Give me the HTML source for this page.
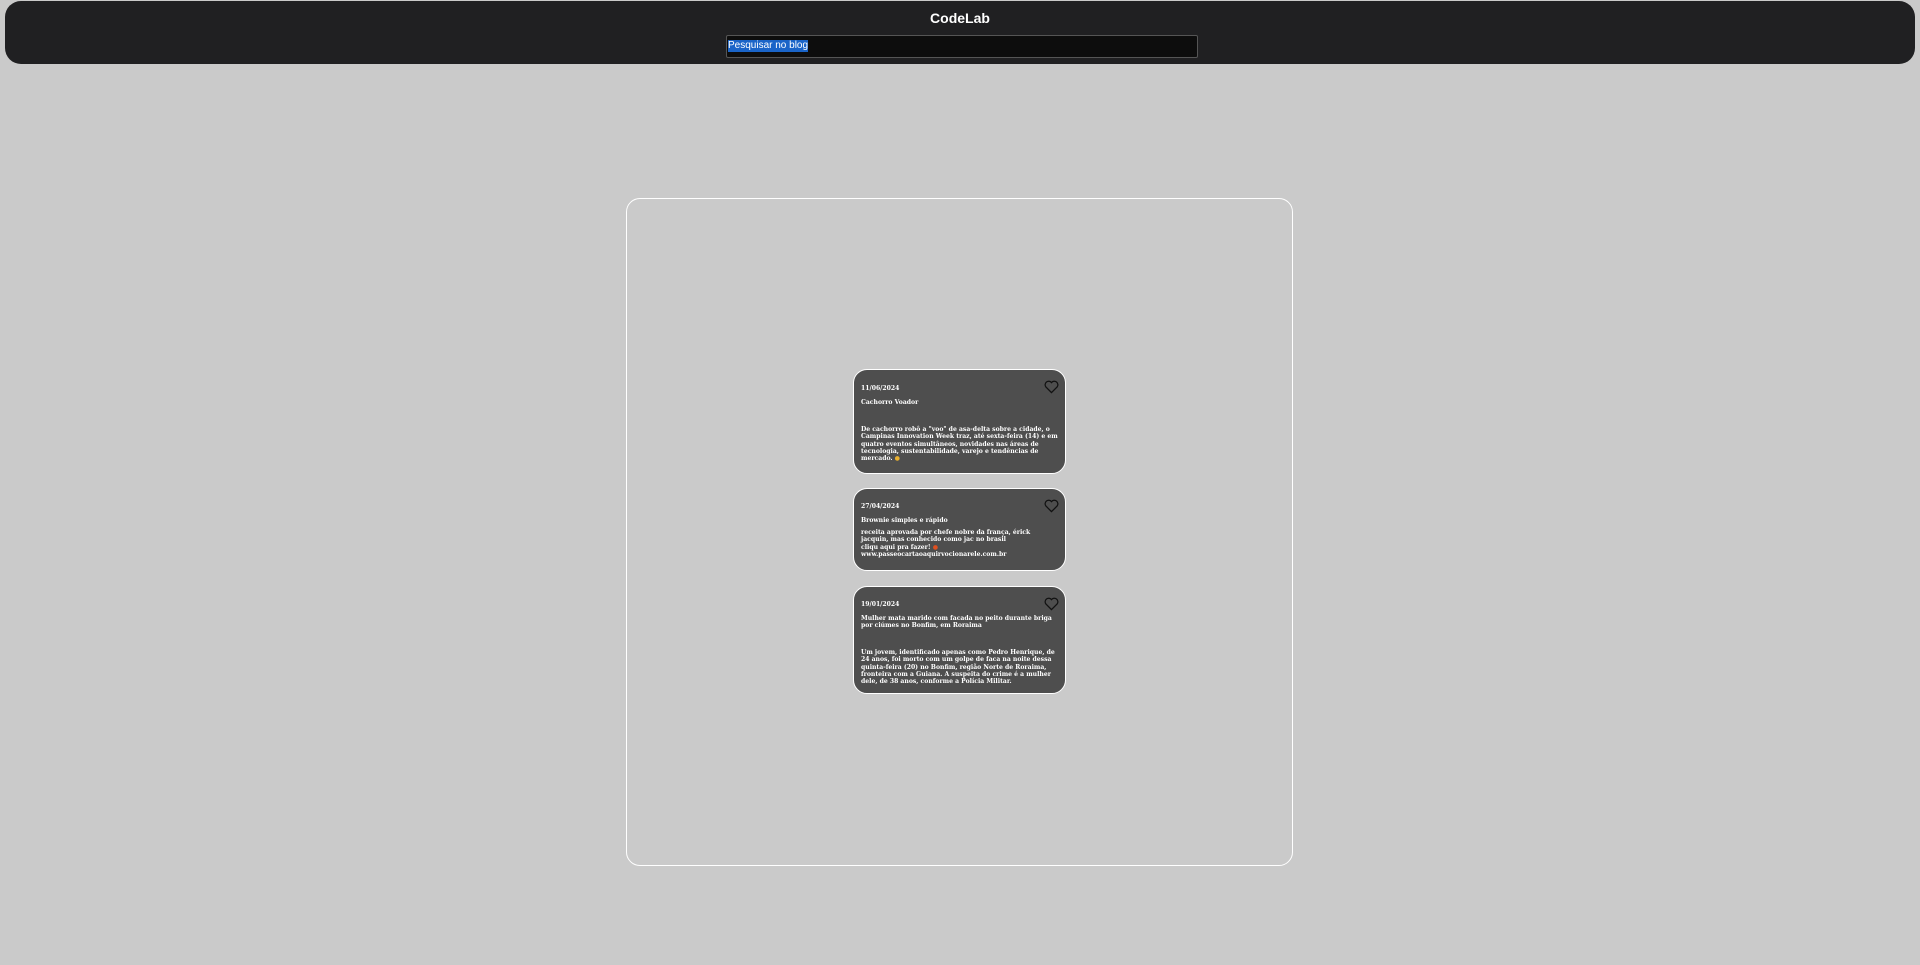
<!DOCTYPE html>
<html><head><meta charset="utf-8"><style>
body{margin:0;background:#cacaca;width:1920px;height:965px;overflow:hidden;position:relative;font-family:"Liberation Sans",sans-serif}
.hdr{position:absolute;left:5px;top:1px;width:1910px;height:63px;background:#202022;border-radius:16px}
.hdr h1{margin:0;position:absolute;top:9px;width:100%;text-align:center;color:#fff;font-size:14px;font-weight:bold}
.inp{position:absolute;left:721px;top:34px;width:470px;height:21px;background:#0d0d0d;border:1px solid #555;border-radius:2px}
.inp span{position:absolute;left:1px;top:4px;font-size:10px;color:#fff;background:#1a64c8;line-height:12px}
.box{position:absolute;left:626px;top:198px;width:665px;height:666px;border:1px solid #fff;border-radius:14px}
.card{position:absolute;left:853px;width:211px;background:#4e4e4e;border:1.5px solid #fff;border-radius:14px;font-family:"DejaVu Serif","Liberation Serif",serif;font-weight:bold;color:#fff;font-size:6.1px;line-height:7.3px}
.card div{position:absolute;left:7px;right:7px}
.h{position:absolute;right:6px;top:10px;width:15px;height:14px}
</style></head><body>
<div class="hdr"><h1>CodeLab</h1><div class="inp"><span>Pesquisar no blog</span></div></div>
<div class="box"></div>
<div class="card" style="top:369px;height:103px">
<div style="top:15px">11/06/2024</div>
<div style="top:29px">Cachorro Voador</div>
<div style="top:56px">De cachorro robô a "voo" de asa-delta sobre a cidade, o Campinas Innovation Week traz, até sexta-feira (14) e em quatro eventos simultâneos, novidades nas áreas de tecnologia, sustentabilidade, varejo e tendências de mercado. <span style="color:#e8b030">●</span></div>
<svg class="h" viewBox="0 0 24 22"><path d="M12 20 L3 11 A5 5 0 0 1 12 4 A5 5 0 0 1 21 11 Z" fill="none" stroke="#111" stroke-width="2"/></svg>
</div>
<div class="card" style="top:488px;height:81px">
<div style="top:14px">27/04/2024</div>
<div style="top:28px">Brownie simples e rápido</div>
<div style="top:40px">receita aprovada por chefe nobre da frança, érick jacquin, mas conhecido como jac no brasil<br>cliqu aqui pra fazer! <span style="color:#e05020">●</span><br>www.passeocartaoaquirvocionarele.com.br</div>
<svg class="h" viewBox="0 0 24 22"><path d="M12 20 L3 11 A5 5 0 0 1 12 4 A5 5 0 0 1 21 11 Z" fill="none" stroke="#111" stroke-width="2"/></svg>
</div>
<div class="card" style="top:586px;height:106px">
<div style="top:14px">19/01/2024</div>
<div style="top:28px">Mulher mata marido com facada no peito durante briga por ciúmes no Bonfim, em Roraima</div>
<div style="top:62px">Um jovem, identificado apenas como Pedro Henrique, de 24 anos, foi morto com um golpe de faca na noite dessa quinta-feira (20) no Bonfim, região Norte de Roraima, fronteira com a Guiana. A suspeita do crime é a mulher dele, de 38 anos, conforme a Polícia Militar.</div>
<svg class="h" viewBox="0 0 24 22"><path d="M12 20 L3 11 A5 5 0 0 1 12 4 A5 5 0 0 1 21 11 Z" fill="none" stroke="#111" stroke-width="2"/></svg>
</div>
</body></html>
